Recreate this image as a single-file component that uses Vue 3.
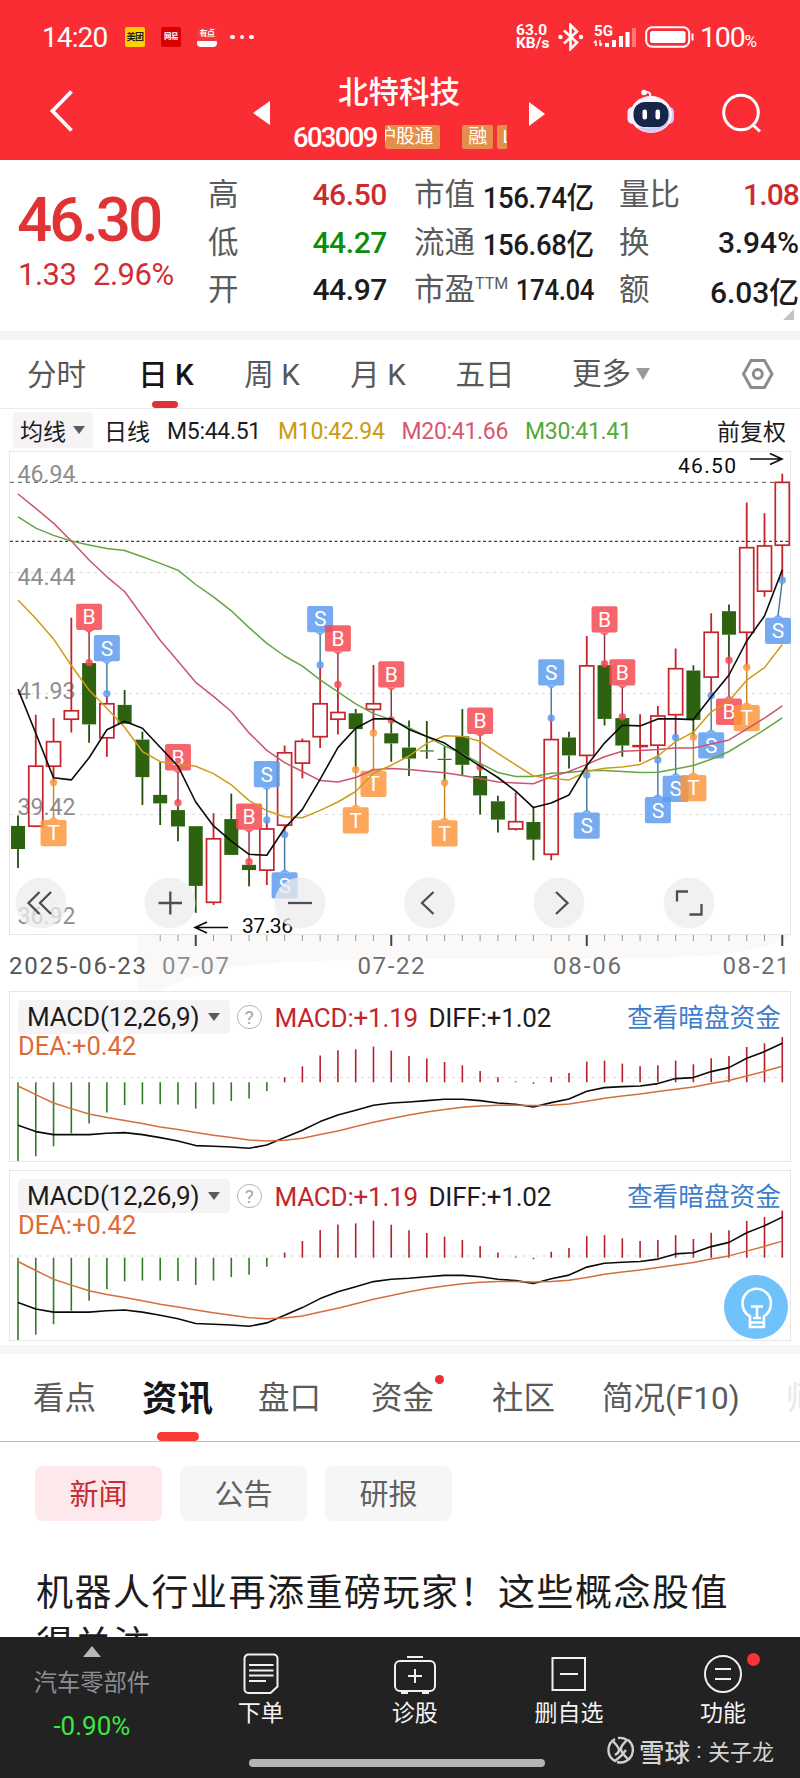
<script setup>
import { ref } from "vue";

// Abas do gráfico
const periodos = ["分时", "日 K", "周 K", "月 K", "五日"];
const periodo = ref("日 K");

const abas = ["看点", "资讯", "盘口", "资金", "社区", "简况(F10)", "师"];
const aba = ref("资讯");

const filtros = ["新闻", "公告", "研报"];
const filtro = ref("新闻");

const medias = [
  { texto: "M5:44.51", classe: "m5" },
  { texto: "M10:42.94", classe: "m10" },
  { texto: "M20:41.66", classe: "m20" },
  { texto: "M30:41.41", classe: "m30" },
];

// Escalas do gráfico: índice do candle -> x, nível -> y
const px = (i) => 18 + i * 17.774;
const py = (v) => Number((440 + (v - 440) * 1.0523).toFixed(1));

// [alta, máxima, topo, base, mínima]
const candles = [
  [0, 796.7, 806.7, 828.7, 846.7],
  [1, 701, 750, 807, 808],
  [1, 704.3, 726.7, 750, 765],
  [1, 609, 697.3, 705.3, 718],
  [0, 652, 652, 710.3, 727.7],
  [1, 683.3, 690.7, 723, 741],
  [0, 677.7, 691.7, 709.7, 709.7],
  [0, 717.3, 724.7, 760.3, 787],
  [0, 746, 777.3, 785.3, 806],
  [0, 788, 791.7, 807.3, 821.3],
  [0, 807, 807, 863.7, 889.3],
  [1, 794.7, 819, 879.3, 882],
  [0, 776, 800.3, 834.3, 834.3],
  [0, 841.7, 843.7, 848.7, 864],
  [1, 801, 809.7, 848.7, 863],
  [1, 730.3, 737.3, 806, 815],
  [1, 723.7, 726.3, 747, 761.7],
  [1, 655, 690.7, 722, 732.7],
  [1, 672.3, 699, 705.3, 720],
  [0, 695.7, 699.7, 714.7, 753],
  [1, 653.7, 690.7, 696, 718],
  [0, 706.7, 718.7, 728.3, 745.7],
  [0, 706.7, 732.3, 742.7, 759.3],
  [0, 707, 735, 736, 743],
  [0, 731, 743, 744, 765],
  [0, 695.7, 721.7, 748.7, 759],
  [0, 750.7, 759.3, 777.7, 796],
  [0, 778, 783.3, 800.7, 813],
  [1, 775, 802.7, 809.7, 811],
  [0, 788.3, 803, 819.7, 839.3],
  [1, 704.3, 724.7, 833.7, 839.3],
  [0, 717.3, 722.7, 739.7, 752.3],
  [1, 626.3, 654.7, 739.7, 758],
  [0, 652.7, 654, 705, 711.3],
  [0, 703, 704.3, 730.3, 741],
  [1, 700.7, 730.5, 731, 745.7],
  [1, 692.7, 702.3, 730, 743],
  [1, 638, 657.3, 701, 722.7],
  [0, 654, 659, 706, 721.7],
  [1, 604.7, 622.7, 665.3, 682.7],
  [0, 596.3, 602.7, 625, 649.3],
  [1, 499.3, 542.3, 622.7, 656],
  [1, 509.7, 540.7, 583.7, 589],
  [1, 472, 480.3, 540, 573],
].map(([alta, max, topo, base, min], i) => ({
  alta,
  max: py(max),
  topo: py(topo),
  base: py(base),
  min: py(min),
  x: px(i),
}));

const pontos = (lista) => lista.map((v, i) => `${px(i).toFixed(1)},${py(v)}`).join(" ");

const linhas = [
  {
    classe: "l30",
    d: pontos([513, 523.7, 530.7, 536, 539.7, 543, 545, 551, 557.3, 563.7, 577.3, 589, 602.3, 618.3, 633.3, 645.3, 655, 668, 679.3, 690.7, 700, 705.7, 713.3, 722, 730.7, 738.3, 747.3, 756, 759.7, 759.7, 756.7, 756, 754, 754, 755, 756, 755.7, 752.7, 749.3, 743.3, 736, 725.7, 715.3, 704]),
  },
  {
    classe: "l20",
    d: pontos([491.3, 505, 519, 536, 554, 570, 584, 607.3, 630.3, 650.3, 670.3, 683.7, 698, 718.3, 735, 746.7, 755, 763.7, 765, 760.7, 753.3, 752.3, 753, 754.7, 756.3, 758.7, 761.7, 765, 766, 766.7, 760, 755, 748.3, 741, 735.7, 735, 734, 732.7, 732.7, 729, 725, 714.7, 704.3, 692.7]),
  },
  {
    classe: "l10",
    d: pontos([592, 609.7, 629, 654.3, 677.7, 695, 713, 736, 745.7, 747.7, 750, 757, 767.7, 782.7, 792.3, 798, 799, 792, 784, 774, 756.7, 749, 740.3, 728.3, 721, 721.7, 726.3, 737.7, 748.7, 759.3, 761.7, 763, 755, 752, 750.7, 748.3, 740.3, 726.7, 717.7, 698.3, 688, 668.3, 656.3, 634.3]),
  },
  {
    classe: "l5",
    d: pontos([676.7, 718.7, 761, 763, 742, 715.3, 707.3, 714, 732, 750, 784, 806.7, 821.3, 833.7, 834.7, 809, 791, 762.3, 732.3, 714, 705, 705, 715, 721.7, 728, 739, 750, 760.7, 773.7, 789.3, 785, 777.3, 749.3, 728, 711, 711.7, 705, 705, 705.7, 684, 663.3, 631, 607.3, 563.3]),
  },
];

// Marcadores: [candle, letra, topo da caixa, ponto]
const marcadores = [
  [2, "T", 801, 765.5],
  [4, "B", 595.7, 651.5],
  [5, "S", 625.3, 681],
  [9, "B", 729, 784.7],
  [13, "B", 785.3, 840.7],
  [14, "S", 745, 801],
  [15, "S", 850.7, 815],
  [17, "S", 597.7, 653.7],
  [18, "B", 616, 672.3],
  [19, "T", 789, 753.3],
  [20, "T", 754.3, 718.3],
  [21, "B", 650.3, 706],
  [24, "T", 801.3, 765.7],
  [26, "B", 694.3, 750.7],
  [30, "S", 648.3, 704.3],
  [32, "S", 794, 758.3],
  [33, "B", 598, 652.7],
  [34, "B", 648.3, 703],
  [36, "S", 779.3, 744],
  [37, "S", 759, 722.7],
  [38, "T", 758.3, 722.3],
  [39, "S", 717.7, 682.7],
  [40, "B", 685.7, 649.3],
  [41, "T", 691.7, 656],
  [43, "S", 609, 573.3],
].map(([i, letra, nivel, ponto]) => {
  const x = i === 43 ? 778 : px(i);
  const y = py(nivel);
  const acima = nivel < ponto;
  const seta = acima
    ? `${x - 5},${y + 26.3} ${x + 5},${y + 26.3} ${x},${y + 29.5}`
    : `${x - 5},${y} ${x + 5},${y} ${x},${y - 3.2}`;
  return { letra, x, y, ponto: py(ponto), px: px(i), fim: acima ? y + 28 : y - 2, seta };
});

const precos = [
  ["46.94", 482],
  ["44.44", 584.7],
  ["41.93", 699.4],
  ["39.42", 814.6],
  ["36.92", 923.5],
];

const datas = [
  { texto: "2025-06-23", x: 9, largura: 137, classe: "escura" },
  { texto: "07-07", x: 162, largura: 67, classe: "clara" },
  { texto: "07-22", x: 357.5, largura: 67, classe: "" },
  { texto: "08-06", x: 553, largura: 68, classe: "" },
  { texto: "08-21", x: 722.5, largura: 67, classe: "" },
];

const marcas = Array.from({ length: 36 }, (_, k) => k + 8);

// MACD
const barras = [79.3, 74, 64, 51, 41.3, 30.3, 22.7, 22, 22, 22.3, 26.3, 22, 18.7, 16.3, 8.7, -5, -16, -26.7, -32, -33, -35.7, -31.7, -26.3, -23.7, -20.3, -17, -11.3, -5, -1, 1.5, -5.7, -9.3, -20.7, -21.7, -18.7, -16, -17, -21.7, -18, -24, -26.3, -35.3, -39, -45.3];
const diff = [43, 49.3, 52.3, 52.3, 52.3, 51, 50.3, 52.3, 55.3, 58.7, 63.3, 64, 64.7, 66, 62.7, 55.3, 48, 39.3, 32.7, 28, 23, 20.7, 19.7, 18.3, 17, 17, 18.3, 20.7, 22, 24.7, 20.3, 16.7, 9, 5.3, 4.3, 3.7, 1.3, -3.7, -4.7, -10.7, -14.7, -24, -30.7, -39];
const dea = [3.7, 12.3, 20.7, 26.3, 31.7, 35.3, 38.3, 41.3, 44.7, 47.3, 50.3, 53, 55.3, 57.7, 58.7, 58, 56, 52.3, 48.7, 44.3, 40, 36.3, 32.7, 29.7, 27.3, 25, 23.7, 23, 23, 23.3, 23, 21.7, 19, 16, 13.7, 11.7, 9.3, 7, 4.7, 1.3, -1.7, -6.3, -11, -16];

const paineis = [
  { zero: 90.3, guia: 85.5, k: 1 },
  { zero: 86.7, guia: 85, k: 1.04 },
].map((p) => {
  const curva = (lista) => lista.map((v, i) => `${(px(i) - 10).toFixed(1)},${(p.zero + v * p.k).toFixed(1)}`).join(" ");
  return {
    ...p,
    barras: barras.map((v, i) => ({ x: px(i) - 10, y: p.zero + v * p.k, queda: v > 2 })),
    diff: curva(diff),
    dea: curva(dea),
  };
});
</script>

<template>
  <div class="tela">
    <header class="topo">
      <div class="status">
        <span class="hora">14:20</span>
        <span class="app amarelo">美团</span>
        <span class="app vermelho">网易</span>
        <span class="app recorte"><i>有点</i><b></b></span>
        <span class="pontos"><i></i><i></i><i></i></span>
        <span class="rede">63.0<br />KB/s</span>
        <svg class="bt" width="26" height="28" viewBox="0 0 26 28">
          <path d="M6 7.500 19 19.500 12.500 26V2L19 8.500 6 20.500" />
          <circle cx="2.500" cy="14" r="2.200" /><circle cx="23" cy="14" r="2.200" />
        </svg>
        <svg class="sinal" width="44" height="26" viewBox="0 0 44 26">
          <text x="1" y="12" textLength="19">5G</text>
          <path d="M3 17v5M0.800 19l2.200-2.500M7 16v5.500M9 19.500 7 22" class="dados" />
          <rect x="12" y="19" width="4" height="4" /><rect x="19" y="16" width="4" height="7" />
          <rect x="26" y="12" width="4" height="11" /><rect x="32.500" y="8" width="4" height="15" />
          <rect x="39" y="4" width="4" height="19" opacity=".35" />
        </svg>
        <svg class="bateria" width="50" height="22" viewBox="0 0 50 22">
          <rect x="1.200" y="1.200" width="43" height="19.500" rx="6" />
          <rect x="5" y="5" width="35.500" height="12" rx="2.500" class="carga" />
          <path d="M47.500 7.500v7" />
        </svg>
        <span class="pct">100<small>%</small></span>
      </div>
      <div class="barra">
        <svg class="voltar" width="24" height="42" viewBox="0 0 24 42"><path d="M22.500 1.500 3.500 21 22.500 40.500" /></svg>
        <i class="tri esq"></i>
        <div class="nome">
          <h1>北特科技</h1>
          <div class="codigo">
            <span>603009</span>
            <div class="selos"><em class="cortado"><b>沪股通</b></em><em>融</em><em>L1</em></div>
          </div>
        </div>
        <i class="tri dir"></i>
        <svg class="robo" width="48" height="46" viewBox="0 0 48 46">
          <path d="M23 9c1-5 0-6-5-6" fill="none" stroke="#fff" stroke-width="2" />
          <circle cx="17" cy="3.500" r="2.800" fill="#fff" />
          <rect x="0.500" y="18" width="10" height="17" rx="5" fill="#f5efff" />
          <rect x="37" y="18" width="10" height="17" rx="5" fill="#cfc8ff" />
          <ellipse cx="24" cy="25.500" rx="21" ry="18.500" fill="#f8f4ff" />
          <path d="M10 38c8 8 22 7 29-1 4-5 5-12 2-19 0 13-8 23-31 20z" fill="#d3caf5" />
          <rect x="6.500" y="13" width="35" height="25" rx="11.500" fill="#16264a" />
          <rect x="15.500" y="20.500" width="4.500" height="10" rx="2.200" fill="#fff" />
          <rect x="28.500" y="20.500" width="4.500" height="10" rx="2.200" fill="#fff" />
        </svg>
        <svg class="lupa" width="42" height="42" viewBox="0 0 42 42">
          <circle cx="20" cy="19.500" r="17.300" /><path d="m31.500 31.500 7.500 7" />
        </svg>
      </div>
    </header>

    <section class="cotacao">
      <div class="preco">
        <strong>46.30</strong>
        <p><span>1.33</span><span>2.96%</span></p>
      </div>
      <dl>
        <div><dt>高</dt><dd class="sobe">46.50</dd></div>
        <div><dt>低</dt><dd class="desce">44.27</dd></div>
        <div><dt>开</dt><dd>44.97</dd></div>
      </dl>
      <dl class="estreita">
        <div><dt>市值</dt><dd>156.74亿</dd></div>
        <div><dt>流通</dt><dd>156.68亿</dd></div>
        <div><dt>市盈<sup>TTM</sup></dt><dd class="pe">174.04</dd></div>
      </dl>
      <dl class="ultima">
        <div><dt>量比</dt><dd class="sobe justo">1.08</dd></div>
        <div><dt>换</dt><dd>3.94%</dd></div>
        <div><dt>额</dt><dd>6.03亿</dd></div>
      </dl>
      <i class="canto"></i>
    </section>

    <nav class="periodos">
      <a v-for="p in periodos" :key="p" :class="{ ativo: p === periodo }" @click="periodo = p"><span>{{ p }}</span></a>
      <a class="mais"><span>更多</span><i></i></a>
      <svg width="34" height="32" viewBox="0 0 34 32">
        <path d="M10 2.500h13.500L31 16l-7.500 13.500H10L2.500 16z" /><circle cx="16.800" cy="16" r="4.500" />
      </svg>
    </nav>

    <div class="medias">
      <span class="seletor">均线<i></i></span>
      <span class="diaria">日线</span>
      <span v-for="m in medias" :key="m.texto" class="media" :class="m.classe">{{ m.texto }}</span>
      <span class="fator">前复权</span>
    </div>

    <!-- Gráfico de candles -->
    <svg class="grafico" width="800" height="541" viewBox="0 450 800 541">
      <path class="sombra" d="M137 935h653c-25 20-90 22-180 24H400C300 962 220 958 160 991h-23z" />
      <rect class="moldura" x="9.5" y="451.500" width="781" height="483" />
      <path class="guia" d="M10 572.500H790M10 693.500H790M10 814.500H790" />
      <path class="guia-alta" d="M10 482.400H790" />
      <path class="guia-media" d="M10 541.400H790" />
      <text v-for="p in precos" :key="p[0]" class="valor" x="17.500" :y="p[1]" textLength="58" lengthAdjust="spacingAndGlyphs">{{ p[0] }}</text>

      <g v-for="(c, i) in candles" :key="'c' + i" :class="c.alta ? 'alta' : 'baixa'">
        <path :d="`M${c.x} ${c.max}V${c.topo}M${c.x} ${c.base}V${c.min}`" />
        <rect :x="c.x - 7" :y="c.topo" width="14" :height="Math.max(c.base - c.topo, 0.8)" />
      </g>

      <g v-for="(m, i) in marcadores" :key="'m' + i" :class="'marca-' + m.letra">
        <path class="haste" :d="`M${m.px} ${m.ponto}L${m.x} ${m.fim}`" />
        <circle :cx="m.px" :cy="m.ponto" r="3.700" />
        <rect :x="m.x - 13" :y="m.y" width="26" height="26.300" rx="2" />
        <polygon :points="m.seta" />
        <text :x="m.x" :y="m.y + 20.500" text-anchor="middle">{{ m.letra }}</text>
      </g>

      <polyline v-for="l in linhas" :key="l.classe" :class="['linha', l.classe]" :points="l.d" />

      <text class="extremo" x="678" y="473" textLength="58">46.50</text>
      <path class="flecha" d="M750 459H781M770 453.500l12 5.500-12 5.500" />
      <text class="extremo" x="242" y="932.500" textLength="51">37.36</text>
      <path class="flecha" d="M228 927.500H196M207 922l-12 5.500 12 5.500" />

      <g class="botoes">
        <circle v-for="x in [41, 170, 300, 429.5, 559, 689]" :key="x" :cx="x" cy="903" r="25.500" />
      </g>
      <g class="glifos">
        <path d="M39.500 892 28.500 903 39.500 914M51 892 40 903 51 914" />
        <path d="M158.500 903h23.500M170.300 891.500v23" />
        <path d="M288 903h24" />
        <path d="M433.500 892 422 903l11.500 11" />
        <path d="M556 892l11.500 11L556 914" />
        <path d="M677 901.500v-10h11M701.500 904v10.500h-12" />
      </g>
      <path v-for="i in marcas" :key="'t' + i" :class="i % 11 === 10 ? 'forte' : 'fraca'" :d="`M${px(i)} 935V${i % 11 === 10 ? 946 : 941}`" />
      <text v-for="d in datas" :key="d.texto" class="data" :class="d.classe" :x="d.x" y="974" :textLength="d.largura">{{ d.texto }}</text>
    </svg>

    <section v-for="(p, n) in paineis" :key="n" class="macd">
      <div class="cabeca">
        <span class="indicador">MACD(12,26,9)<i></i></span>
        <span class="ajuda">?</span>
        <span class="v-macd">MACD:+1.19</span>
        <span class="v-diff">DIFF:+1.02</span>
        <a>查看暗盘资金</a>
      </div>
      <div class="v-dea">DEA:+0.42</div>
      <svg width="780" height="169" viewBox="0 0 780 169">
        <path class="guia" :d="`M1 ${p.guia}H779`" />
        <path v-for="(b, i) in p.barras" :key="i" :class="b.queda ? 'bv' : 'br'" :d="`M${b.x} ${p.zero}V${b.y}`" />
        <polyline class="linha l5" :points="p.diff" />
        <polyline class="linha ldea" :points="p.dea" />
      </svg>
      <div v-if="n === 1" class="dica">
        <svg width="64" height="64" viewBox="0 0 64 64">
          <path d="M26 52V41.500C20.500 38.500 18.500 33 18.500 28a14.200 14.200 0 0 1 28.400 0c0 5-2 10.500-7 13.500V52zM26 47.500h13" />
          <path d="M27 31.500h12M29 43h8M33 31.500V43" />
        </svg>
      </div>
    </section>

    <nav class="abas">
      <a v-for="a in abas" :key="a" :class="{ ativo: a === aba, novo: a === '资金', fim: a === '师' }" @click="aba = a"><span>{{ a }}</span></a>
    </nav>

    <div class="filtros">
      <button v-for="f in filtros" :key="f" :class="{ ativo: f === filtro }" @click="filtro = f">{{ f }}</button>
    </div>

    <article class="noticia">机器人行业再添重磅玩家！这些概念股值得关注</article>

    <footer class="rodape">
      <div class="acoes">
        <div class="setor">
          <i></i>
          <span>汽车零部件</span>
          <b>-0.90%</b>
        </div>
        <a>
          <svg width="44" height="42" viewBox="0 0 44 42">
            <path d="M9.500 1.500h25a4 4 0 0 1 4 4v28l-7 6.500h-22a4 4 0 0 1-4-4v-30.500a4 4 0 0 1 4-4z" />
            <path d="M10 12h24.500M10 17.500h24.500M10 22.500h24.500M10 28h17" />
          </svg>
          <span>下单</span>
        </a>
        <a>
          <svg width="44" height="42" viewBox="0 0 44 42">
            <rect x="2" y="8" width="40" height="30" rx="5" /><path d="M14 4h16M22 16v14M15 23h14M8 40h7M29 40h7" />
          </svg>
          <span>诊股</span>
        </a>
        <a>
          <svg width="44" height="42" viewBox="0 0 44 42">
            <rect x="5.500" y="5" width="32.500" height="32" /><path d="M13 21h18" />
          </svg>
          <span>删自选</span>
        </a>
        <a class="novo">
          <svg width="44" height="42" viewBox="0 0 44 42">
            <circle cx="22" cy="21" r="18" /><path d="M14 16h16M14 26h16" />
          </svg>
          <span>功能</span>
        </a>
      </div>
      <div class="gesto"></div>
      <div class="marca">
        <svg width="30" height="30" viewBox="0 0 30 30">
          <path d="M10 4a12.500 12.500 0 0 0 0 22c3-2 6-4 11-11M13 3a12.500 12.500 0 0 1 9 2c-4 4-6 6-6 9 0 4 3 6 7 10" />
          <path d="M23 5a12.500 12.500 0 0 1-11 22M8 6c3 4 6 6 6 9 0 2-2 4-4 5" />
        </svg>
        <b>雪球</b><i>:</i><span>关子龙</span>
      </div>
    </footer>
  </div>
</template>

<style>
body {
  margin: 0;
  background: #fff;
}
</style>

<style scoped>
.tela {
  width: 800px;
  height: 1778px;
  overflow: hidden;
  display: flex;
  flex-direction: column;
  position: relative;
  background: #fff;
  color: #1c1c1e;
  font-family: Roboto, "Noto Sans CJK SC", sans-serif;
  white-space: nowrap;
}

.tela > * {
  flex: none;
}

i,
em {
  font-style: normal;
}

/* Topo */
.topo {
  height: 160px;
  background: #fa2d34;
  color: #fff;
}

.status {
  display: flex;
  align-items: center;
  height: 64px;
  padding: 10px 0 0 42px;
  box-sizing: border-box;
}

.hora {
  width: 83px;
  font-size: 28px;
  letter-spacing: -0.9px;
}

.app {
  width: 20px;
  height: 20px;
  margin-right: 16px;
  border-radius: 2px;
  font-size: 9px;
  line-height: 20px;
  text-align: center;
  letter-spacing: -0.5px;
  font-weight: 700;
  overflow: hidden;
}

.amarelo {
  background: #ffd100;
  color: #222;
}

.vermelho {
  background: #d90000;
  font-size: 7.5px;
}

.recorte {
  line-height: 13px;
  font-size: 8px;
  background: #f0383c;
}

.recorte i {
  display: block;
  height: 14px;
}

.recorte b {
  display: block;
  height: 6px;
  background: #fff;
  border-radius: 1px 1px 4px 4px;
}

.pontos {
  display: flex;
  gap: 5px;
  margin-left: -3px;
  width: 286px;
}

.pontos i {
  width: 4.5px;
  height: 4.5px;
  border-radius: 50%;
  background: #fff;
}

.rede {
  width: 42px;
  font-size: 15.5px;
  line-height: 13.5px;
  font-weight: 700;
}

.bt {
  fill: none;
  stroke: #fff;
  stroke-width: 2.6;
}

.bt circle {
  fill: #fff;
  stroke: none;
}

.sinal {
  margin: 0 8px 0 9px;
  fill: #fff;
}

.sinal text {
  font: 700 15px Roboto, sans-serif;
}

.dados {
  fill: none;
  stroke: #fff;
  stroke-width: 1.5;
}

.bateria {
  fill: none;
  stroke: #fff;
  stroke-width: 2;
}

.bateria .carga {
  fill: #fff;
  stroke: none;
}

.pct {
  margin-left: 5px;
  font-size: 28.5px;
  letter-spacing: -1.2px;
}

.pct small {
  font-size: 17px;
}

.barra {
  display: flex;
  align-items: flex-start;
  height: 96px;
  padding-left: 49px;
}

.voltar {
  margin-top: 26px;
  fill: none;
  stroke: #fff;
  stroke-width: 3.8;
}

.tri {
  width: 0;
  height: 0;
  border-top: 12.5px solid transparent;
  border-bottom: 12.5px solid transparent;
}

.esq {
  margin: 37px 0 0 180px;
  border-right: 17px solid #fff;
}

.dir {
  margin: 38px 0 0 22px;
  border-left: 16px solid #fff;
}

.nome {
  width: 214px;
  margin-left: 23px;
}

h1 {
  margin: 11px 0 0;
  font-size: 30.5px;
  line-height: 36px;
  font-weight: 500;
  text-align: center;
  text-indent: -2px;
}

.codigo {
  display: flex;
  align-items: center;
  height: 24px;
  margin-top: 14px;
  font-size: 27.5px;
  font-weight: 500;
  letter-spacing: -1.7px;
}

.codigo > span {
  width: 92px;
}

.selos {
  display: flex;
  width: 122px;
  overflow: hidden;
  gap: 4px;
}

.selos em {
  flex: none;
  width: 31px;
  height: 24px;
  background: #e58e4c;
  border-radius: 2px;
  font-size: 19px;
  line-height: 23px;
  font-weight: 400;
  letter-spacing: -0.5px;
  text-align: center;
}

.selos .cortado {
  width: 55px;
  margin-right: 18px;
  display: flex;
  justify-content: flex-end;
  overflow: hidden;
}

.cortado b {
  font-weight: 400;
  padding-right: 7px;
}

.robo {
  margin: 25px 0 0 82px;
}

.lupa {
  margin: 29px 0 0 46px;
  fill: none;
  stroke: #fff;
  stroke-width: 3;
}

/* Cotação */
.cotacao {
  position: relative;
  display: flex;
  height: 171px;
  box-sizing: border-box;
  padding: 11px 1px 0 17px;
}

.preco {
  width: 191px;
  color: #e03336;
}

.preco strong {
  display: block;
  margin-top: 17px;
  font-size: 62px;
  line-height: 64px;
  font-weight: 500;
  letter-spacing: -3px;
}

.preco p {
  margin: 4px 0 0 1px;
  font-size: 31px;
  line-height: 38px;
  letter-spacing: -0.5px;
  color: #cf2f33;
}

.preco p span:first-child {
  display: inline-block;
  width: 75px;
}

dl {
  width: 179px;
  margin: 0 27px 0 0;
}

dl div {
  display: flex;
  justify-content: space-between;
  align-items: center;
  height: 47.5px;
}

dt {
  margin-top: -5px;
  font-size: 30.5px;
  color: #5a5a5a;
}

dt sup {
  font-size: 16px;
  line-height: 0;
}

dd {
  margin: 0;
  font-size: 30px;
  font-weight: 500;
  letter-spacing: -0.4px;
}

.estreita {
  width: 180px;
  margin-right: 25px;
}

.estreita dd {
  transform: scaleX(0.92);
  transform-origin: right;
  margin-left: -30px;
}

.estreita .pe {
  transform: scaleX(0.86);
}

.ultima {
  width: 180px;
  margin-right: 0;
}

.ultima dd {
  letter-spacing: -0.1px;
}

.ultima .justo {
  letter-spacing: -0.9px;
}

.sobe {
  color: #cc2b30;
}

.desce {
  color: #0a8f0a;
}

.canto {
  position: absolute;
  left: 783px;
  top: 149px;
  border-left: 11px solid transparent;
  border-bottom: 11px solid #c4c4c4;
}

/* Períodos */
.periodos {
  display: flex;
  height: 78px;
  box-sizing: border-box;
  border-top: 9px solid #f5f5f5;
  border-bottom: 1px solid #ebebeb;
  font-size: 29.5px;
  color: #585858;
}

.periodos a {
  position: relative;
  width: 106px;
  line-height: 71px;
  text-align: center;
}

.periodos a:first-child {
  width: 113px;
}

.periodos .ativo {
  color: #151515;
  font-weight: 500;
}

.ativo::after {
  content: "";
  position: absolute;
  left: 50%;
  bottom: 0;
}

.periodos .ativo::after {
  width: 26px;
  height: 7px;
  margin-left: -14px;
  border-radius: 3.5px;
  background: #e03236;
}

.periodos .mais {
  width: 116px;
  display: flex;
  align-items: center;
  gap: 5px;
  padding-left: 33px;
}

.mais i {
  border: 7.5px solid transparent;
  border-top: 12px solid #999;
  border-bottom: 0;
}

.periodos a:nth-child(5) {
  width: 108px;
}

.periodos svg {
  margin: 18px 0 0 53px;
  fill: none;
  stroke: #8c8c8c;
  stroke-width: 3;
}

.medias {
  display: flex;
  align-items: center;
  height: 41px;
  padding: 0 14px 0 13px;
  font-size: 23px;
}

.seletor {
  width: 80px;
  height: 36px;
  box-sizing: border-box;
  padding-left: 7px;
  margin-right: 11px;
  background: #f6f3f4;
  border-radius: 4px;
  display: flex;
  align-items: center;
  gap: 7px;
}

.seletor i,
.indicador i {
  border: 6px solid transparent;
  border-top: 8px solid #5b5b5f;
  border-bottom: 0;
}

.diaria {
  width: 63px;
}

.media {
  padding-top: 3px;
  width: 123.5px;
  letter-spacing: -0.3px;
}

.m5 {
  width: 111px;
}

.m10 {
  color: #cc9a10;
}

.m20 {
  color: #d8566f;
}

.m30 {
  color: #56a83a;
}

.fator {
  margin-left: auto;
}

/* Gráfico */
svg {
  display: block;
}

.sombra {
  fill: #fbf8f8;
}

.moldura {
  fill: none;
  stroke: #e6e6e6;
}

.guia {
  fill: none;
  stroke: #dcdcdc;
  stroke-dasharray: 3 4;
}

.guia-alta {
  stroke: #77775c;
  stroke-width: 1.2;
  stroke-dasharray: 4 4;
}

.guia-media {
  stroke: #7b2149;
  stroke-width: 1.3;
  stroke-dasharray: 3 2.5;
}

.grafico text {
  font-family: Roboto, sans-serif;
}

.valor {
  font-size: 24px;
  fill: #8e8e8e;
}

.alta path,
.baixa path {
  fill: none;
  stroke: #c4242c;
  stroke-width: 1.8;
}

.alta rect {
  fill: none;
  stroke: #c4242c;
  stroke-width: 1.7;
}

.baixa path {
  stroke: #24500f;
}

.baixa rect {
  fill: #2c6210;
}

.marca-B {
  fill: #f4474f;
  stroke: #8d2b3c;
}

.marca-S {
  fill: #5c9bee;
  stroke: #3f7597;
}

.marca-T {
  fill: #fb963c;
  stroke: #c88320;
}

.marca-B rect,
.marca-S rect,
.marca-T rect,
polygon,
.grafico g circle {
  stroke: none;
  fill-opacity: 0.84;
}

.grafico g text {
  stroke: none;
  fill: #fff;
  font-size: 21px;
}

.haste {
  stroke-width: 1.4;
}

.linha {
  fill: none;
  stroke-width: 1.5;
  stroke-linejoin: round;
}

.l5 {
  stroke: #0b0b0b;
  stroke-width: 1.6;
}

.l10 {
  stroke: #cf9c18;
}

.l20 {
  stroke: #cc5470;
}

.l30 {
  stroke: #62a544;
}

.ldea {
  stroke: #d46f3d;
}

.extremo {
  font-size: 21px;
  fill: #0b0b0b;
}

.flecha {
  fill: none;
  stroke: #0b0b0b;
  stroke-width: 1.6;
}

.grafico .botoes circle {
  fill: #ececec;
  fill-opacity: 0.75;
}

.glifos {
  fill: none;
  stroke: #4e4e4e;
  stroke-width: 2.3;
}

.forte {
  stroke: #444;
  stroke-width: 2;
}

.fraca {
  stroke: #999;
}

.data {
  font-size: 24px;
  fill: #6d6d6d;
}

.escura {
  fill: #555;
}

.clara {
  fill: #8f8f8f;
}

/* MACD */
.macd {
  position: relative;
  width: 782px;
  height: 171px;
  box-sizing: border-box;
  margin: 0 0 8px 9px;
  border: 1px solid #e6e6e6;
}

.macd > svg {
  position: absolute;
  left: 0;
  top: 0;
}

.bv {
  stroke: #2f7d22;
  stroke-width: 1.6;
}

.br {
  stroke: #b3202b;
  stroke-width: 1.6;
}

.cabeca {
  display: flex;
  align-items: center;
  height: 34px;
  padding: 8px 9px 0 8px;
  font-size: 26px;
}

.indicador {
  width: 212px;
  height: 34px;
  line-height: 36px;
  box-sizing: border-box;
  padding-left: 9px;
  display: flex;
  align-items: center;
  gap: 9px;
  background: #f6f3f4;
  border-radius: 4px;
  letter-spacing: -0.2px;
}

.ajuda {
  width: 22.5px;
  height: 22.5px;
  margin-left: 7px;
  border: 1.8px solid #b3b3b3;
  border-radius: 50%;
  color: #a5a5a5;
  font-size: 19px;
  line-height: 23px;
  text-align: center;
}

.v-macd {
  width: 154px;
  margin-left: 13px;
  padding-top: 2px;
  color: #c3252e;
  letter-spacing: -0.2px;
}

.v-diff {
  padding-top: 2px;
  letter-spacing: -0.2px;
}

.cabeca a {
  margin: -4px 0 0 auto;
  font-size: 25.7px;
  color: #3d7ecb;
}

.v-dea {
  padding-left: 8px;
  font-size: 25.5px;
  line-height: 24px;
  color: #dd6b35;
}

.dica {
  position: absolute;
  right: 2px;
  bottom: 1px;
  border-radius: 50%;
  background: #70c2fb;
}

.dica path {
  fill: none;
  stroke: #fff;
  stroke-width: 2.6;
}

/* Abas */
.abas {
  display: flex;
  height: 97px;
  margin-top: -4px;
  box-sizing: border-box;
  border-top: 9px solid #f6f6f6;
  border-bottom: 1px solid #bdbdc0;
  padding-left: 33px;
  font-size: 31.5px;
  line-height: 90px;
  color: #5a5a5a;
}

.abas a {
  position: relative;
  margin-right: 46px;
}

.abas .ativo {
  margin-right: 45px;
  font-size: 35.5px;
  font-weight: 700;
  color: #161616;
}

.abas .ativo::after {
  width: 42px;
  height: 9px;
  margin-left: -21px;
  border-radius: 4.5px;
  background: #f83a33;
}

.abas a:nth-child(3) {
  margin-right: 50px;
}

.abas .novo {
  margin-right: 58px;
}

.abas a:nth-child(5) {
  margin-right: 47px;
}

.abas .novo::before,
.acoes .novo::before {
  content: "";
  position: absolute;
  right: -10px;
  top: 21px;
  width: 9px;
  height: 9px;
  border-radius: 50%;
  background: #e53238;
}

.abas .fim {
  color: #e8e8e8;
}

.filtros {
  display: flex;
  gap: 18px;
  padding: 24px 35px 0;
}

.filtros button {
  width: 127px;
  height: 55px;
  padding: 0 0 4px;
  border: 0;
  border-radius: 8px;
  background: #f6f6f6;
  color: #606060;
  font: 400 29px "Noto Sans CJK SC", sans-serif;
}

.filtros .ativo {
  background: #fde8ec;
  color: #c92b33;
}

.noticia {
  width: 705px;
  height: 88px;
  margin: 47px 0 0 36px;
  overflow: hidden;
  white-space: normal;
  font-size: 37px;
  line-height: 52px;
  letter-spacing: 1.5px;
  color: #1c1c1c;
}

/* Rodapé */
.rodape {
  position: absolute;
  left: 0;
  right: 0;
  bottom: 0;
  height: 141px;
  background: #222;
  color: #f4f4f4;
}

.acoes {
  display: flex;
  height: 122px;
}

.acoes > a {
  position: relative;
  width: 154.3px;
  display: flex;
  flex-direction: column;
  align-items: center;
  padding-top: 16px;
  font-size: 23px;
  line-height: 38px;
}

.acoes > a svg {
  fill: none;
  stroke: #f0f0f0;
  stroke-width: 2;
}

.setor {
  width: 184px;
  display: flex;
  flex-direction: column;
  align-items: center;
  color: #8d8d94;
  font-size: 23.3px;
}

.setor i {
  margin-top: 9px;
  border: 9.5px solid transparent;
  border-bottom: 11px solid #b8b8b8;
  border-top: 0;
}

.setor span {
  margin-top: 9px;
  line-height: 34px;
}

.setor b {
  margin-top: 11px;
  font-size: 26px;
  line-height: 30px;
  font-weight: 400;
  color: #3be842;
}

.acoes .novo::before {
  right: 40px;
  top: 16px;
  width: 13px;
  height: 13px;
  background: #fb3236;
}

.gesto {
  width: 296px;
  height: 7.5px;
  margin-left: 249px;
  border-radius: 4px;
  background: #b5b5b5;
}

/* Marca d'água sobre o rodapé */
.marca {
  position: absolute;
  left: 605px;
  bottom: 11px;
  display: flex;
  align-items: center;
  height: 34px;
  color: #d4d4d4;
  font-size: 22px;
}

.marca svg {
  margin-right: 4px;
  fill: none;
  stroke: #d0d0d0;
  stroke-width: 2.4;
}

.marca b {
  font-size: 25.5px;
  font-weight: 500;
}

.marca i {
  width: 18px;
  text-align: center;
}
</style>
